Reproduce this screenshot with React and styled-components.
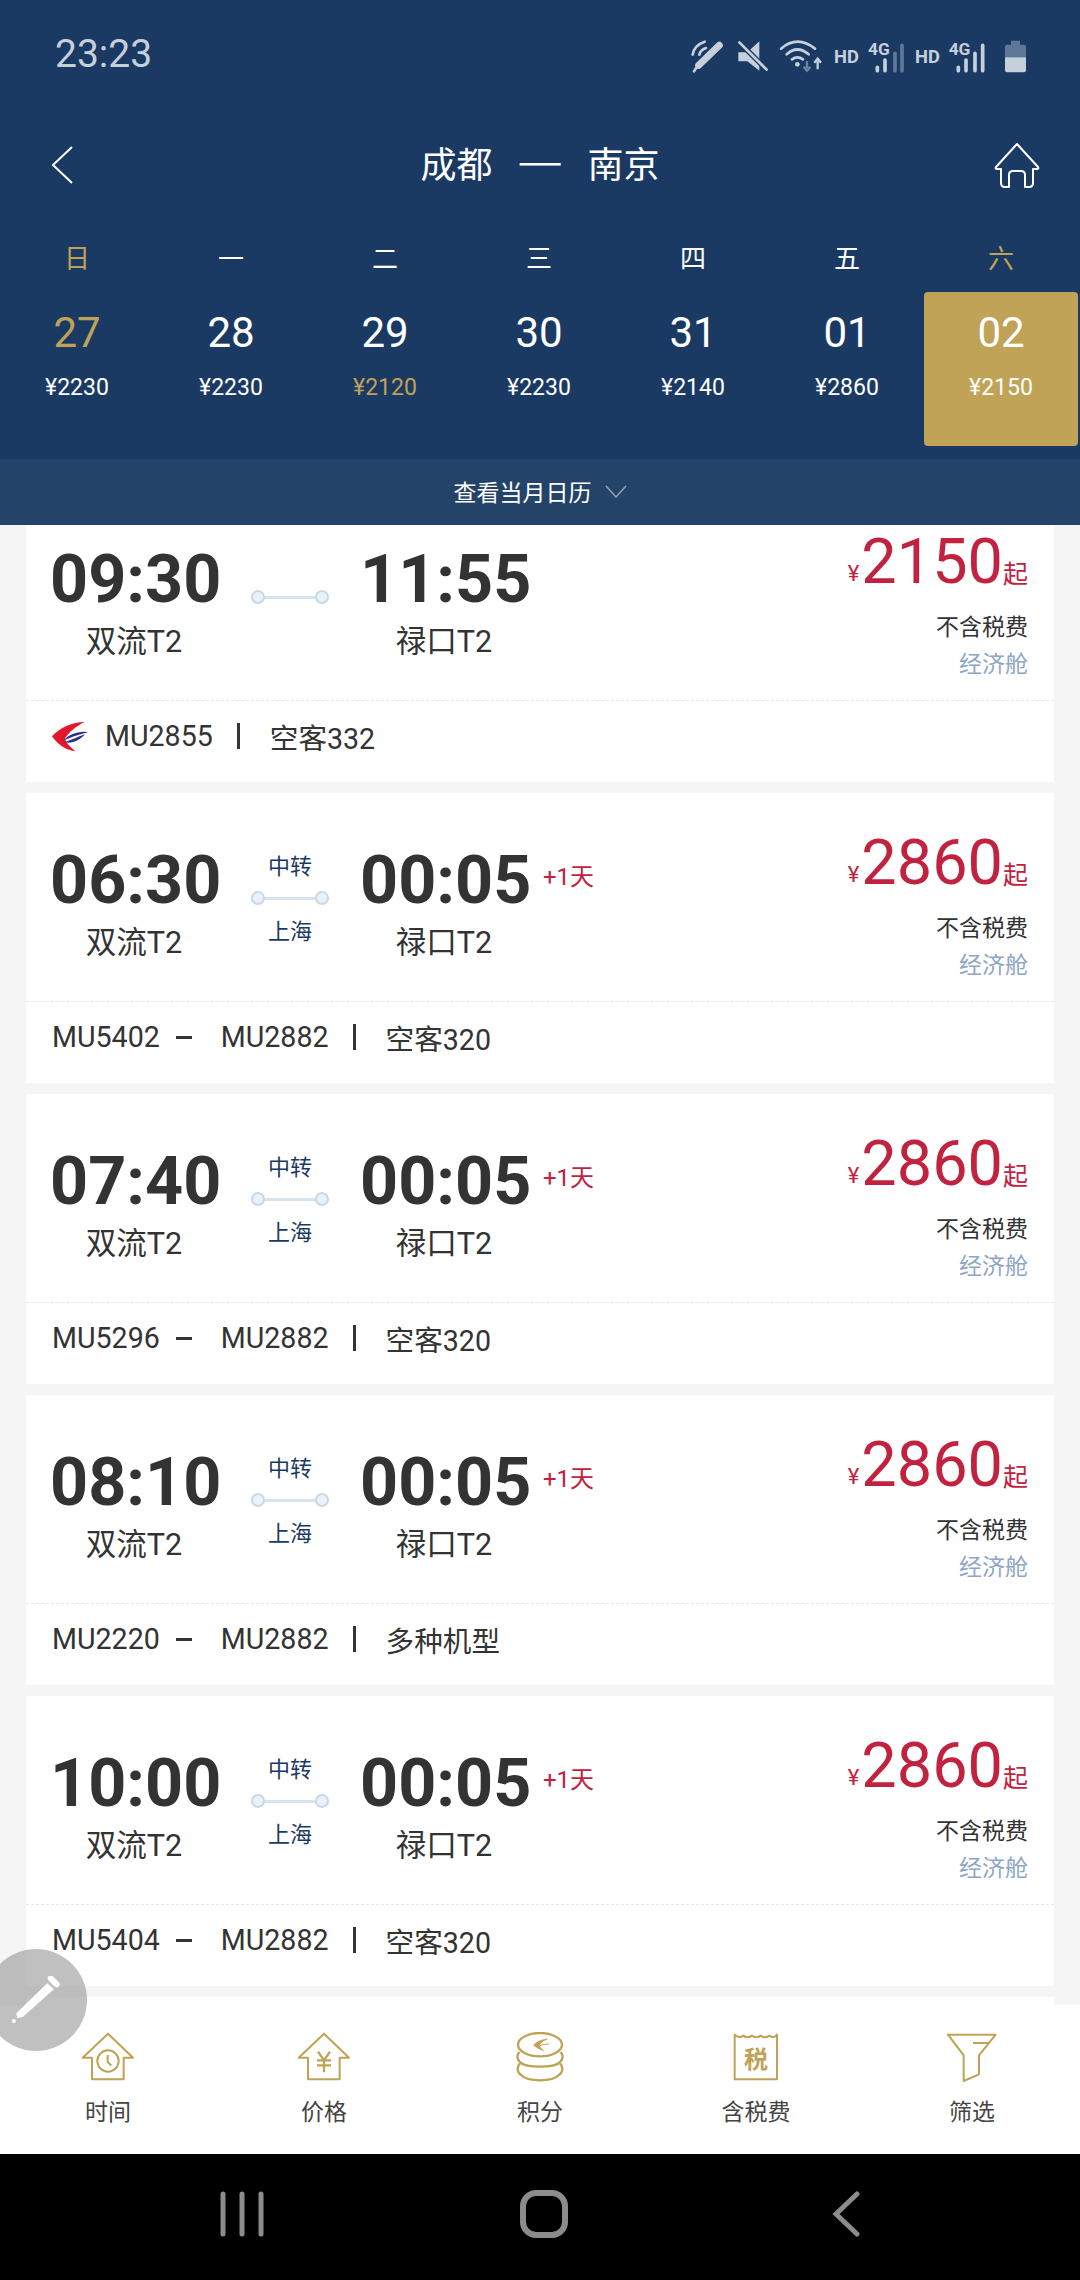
import React from "react";
import styled, { createGlobalStyle } from "styled-components";

const NAVY = "#1b3a63";
const GOLD = "#bfa258";
const RED = "#c1223f";

const days = ["日", "一", "二", "三", "四", "五", "六"];
const dates = [
    { day: "27", price: "¥2230", dayGold: true },
    { day: "28", price: "¥2230" },
    { day: "29", price: "¥2120", priceGold: true },
    { day: "30", price: "¥2230" },
    { day: "31", price: "¥2140" },
    { day: "01", price: "¥2860" },
    { day: "02", price: "¥2150", active: true },
];

const flights = [
    { from: "09:30", to: "11:55", price: "2150", codes: ["MU2855"], plane: "空客332", logo: true },
    { from: "06:30", to: "00:05", price: "2860", codes: ["MU5402", "MU2882"], plane: "空客320", via: "上海", nextDay: true },
    { from: "07:40", to: "00:05", price: "2860", codes: ["MU5296", "MU2882"], plane: "空客320", via: "上海", nextDay: true },
    { from: "08:10", to: "00:05", price: "2860", codes: ["MU2220", "MU2882"], plane: "多种机型", via: "上海", nextDay: true },
    { from: "10:00", to: "00:05", price: "2860", codes: ["MU5404", "MU2882"], plane: "空客320", via: "上海", nextDay: true },
];

const StatusIcons = () => (
    <svg width="400" height="60" viewBox="0 0 1200 180" fill="none">
        <g stroke="#c6cfdc" strokeLinecap="round">
            <path d="M178 64L116 124" strokeWidth="21" />
            <path d="M110 130L102 142" strokeWidth="8" />
            <path d="M98 92Q102 64 134 53" strokeWidth="8" />
            <path d="M118 92Q121 78 138 72" strokeWidth="8" />
        </g>
        <path d="M235 85H262L298 52V140L262 112H235Z" fill="#c6cfdc" />
        <path d="M238 55L320 137" stroke={NAVY} strokeWidth="16" />
        <path d="M238 55L320 137" stroke="#c6cfdc" strokeWidth="8" strokeLinecap="round" />
        <g stroke="#c6cfdc" strokeLinecap="round" strokeWidth="8">
            <path d="M363 74Q412 32 465 74" />
            <path d="M380 91Q412 62 446 91" />
            <path d="M396 106Q412 94 429 106" />
        </g>
        <circle cx="412" cy="121" r="7" fill="#c6cfdc" />
        <path d="M441 112V132M431 128L441 140L451 128" stroke="#6d84a4" strokeWidth="7" />
        <path d="M473 136V112M463 116L473 104L483 116" stroke="#c6cfdc" strokeWidth="7" />
        <g fill="#c6cfdc" fontFamily="Roboto, sans-serif" fontWeight="700">
            <text x="522" y="118" fontSize="55">HD</text>
            <text x="624" y="92" fontSize="52">4G</text>
            <text x="765" y="118" fontSize="55">HD</text>
            <text x="866" y="92" fontSize="52">4G</text>
        </g>
        <g strokeLinecap="round" strokeWidth="11">
            <path d="M652 130V140M675 108V140" stroke="#c6cfdc" />
            <path d="M705 88V140M726 64V140" stroke="#5f7899" />
            <path d="M895 130V140M918 108V140M945 88V140M968 64V140" stroke="#c6cfdc" />
        </g>
        <path d="M1053 50H1080V62H1092Q1098 62 1098 68V100H1035V68Q1035 62 1041 62H1053Z" fill="#5f7899" />
        <path d="M1035 100H1098V139Q1098 145 1092 145H1041Q1035 145 1035 139Z" fill="#c6cfdc" />
    </svg>
);

const BackIcon = () => (
    <svg width="24" height="40" viewBox="0 0 24 40" fill="none">
        <path d="M22 2L3 20L22 38" stroke="#fff" strokeWidth="2" />
    </svg>
);

const HomeIcon = () => (
    <svg width="46" height="46" viewBox="0 0 46 46" fill="none">
        <path
            d="M23 2L2 25Q1 27 3 27H7V41Q7 45 11 45H15V33Q15 29 19 29H27Q31 29 31 33V45H35Q39 45 39 41V27H43Q45 27 44 25Z"
            stroke="#fff"
            strokeWidth="2"
            strokeLinejoin="round"
        />
    </svg>
);

const AirlineLogo = () => (
    <svg width="36" height="31" viewBox="0 0 107 90">
        <path d="M97 2C60 2 26 18 0 44C14 64 36 84 70 89C54 78 44 66 38 52C50 32 72 14 97 2Z" fill="#e1182c" />
        <path d="M107 32C80 27 50 38 33 58C55 47 80 38 107 32Z" fill="#2a2f8f" />
        <path d="M98 38C80 44 56 55 38 62C60 68 84 54 98 38Z" fill="#2a2f8f" />
    </svg>
);

const HouseShape = "M143 70L218 142H190V207H95V142H67Z";

const ClockIcon = () => (
    <svg width="56" height="50" viewBox="59 65 168 150" fill="none" stroke={GOLD} strokeWidth="6" strokeLinejoin="round">
        <path d={HouseShape} />
        <circle cx="143" cy="152" r="32" />
        <path d="M142 134V155L153 166" />
    </svg>
);

const YenIcon = () => (
    <svg width="56" height="50" viewBox="59 65 168 150" fill="none" stroke={GOLD} strokeLinejoin="round">
        <path d={HouseShape} strokeWidth="6" />
        <path d="M125 124L143 150L161 124M122 150H164M122 165H164M143 150V186" strokeWidth="7" />
    </svg>
);

const CoinsIcon = () => (
    <svg width="48" height="50" viewBox="0 0 144 150" fill="none" stroke={GOLD} strokeWidth="7">
        <ellipse cx="72" cy="38" rx="66" ry="35" />
        <path d="M10 60C0 72 4 84 14 92C30 108 114 108 130 92C140 84 144 72 134 60" />
        <path d="M12 94C0 106 4 122 16 130C34 150 110 150 128 130C140 122 144 106 132 94" />
        <path d="M96 20C76 22 60 30 52 40C62 48 72 54 84 56C76 50 72 44 70 40C76 30 84 26 96 20Z" fill={GOLD} strokeWidth="1" />
        <path d="M100 36C88 36 78 38 70 42" strokeWidth="3" />
    </svg>
);

const TaxIcon = () => (
    <svg width="56" height="50" viewBox="505 65 168 150" fill="none" stroke={GOLD} strokeWidth="6" strokeLinejoin="round">
        <path d="M525 73Q538 86 551 76Q564 86 577 76Q590 86 603 76Q616 86 629 76Q642 86 652 73V207H525Z" />
        <text x="589" y="174" fontSize="72" fontWeight="700" textAnchor="middle" fill={GOLD} stroke="none" fontFamily="'Noto Sans CJK SC', sans-serif">
            税
        </text>
    </svg>
);

const FunnelIcon = () => (
    <svg width="56" height="50" viewBox="1153 65 168 150" fill="none" stroke={GOLD} strokeWidth="6" strokeLinejoin="round">
        <path d="M1165 73H1308L1258 135V192L1212 212V135Z" />
        <path d="M1240 98H1288" />
    </svg>
);

const PencilIcon = () => (
    <svg width="48" height="48" viewBox="0 0 48 48" fill="#fff">
        <path d="M38.7 2.3L44.7 8.3" stroke="#fff" strokeWidth="6" strokeLinecap="round" />
        <path d="M35.3 7.3L42 13.3L11 40.7L5.3 42.3L4.3 37.3Z" />
        <circle cx="1.9" cy="45" r="2" />
    </svg>
);

const tabs = [
    { label: "时间", icon: <ClockIcon /> },
    { label: "价格", icon: <YenIcon /> },
    { label: "积分", icon: <CoinsIcon /> },
    { label: "含税费", icon: <TaxIcon /> },
    { label: "筛选", icon: <FunnelIcon /> },
];

const FlightCard = ({ flight }) => (
    <Card>
        <CardMain>
            <Stop>
                <Time>{flight.from}</Time>
                <Airport>双流T2</Airport>
            </Stop>
            <Route>
                <Via>{flight.via && "中转"}</Via>
                <Track />
                <Via>{flight.via}</Via>
            </Route>
            <Stop>
                <Time>{flight.to}</Time>
                <Airport>禄口T2</Airport>
            </Stop>
            {flight.nextDay && <NextDay>+1天</NextDay>}
            <PriceBox>
                <Price>
                    <small>¥</small>
                    <b>{flight.price}</b>
                    <em>起</em>
                </Price>
                <Tax>不含税费</Tax>
                <Cabin>经济舱</Cabin>
            </PriceBox>
        </CardMain>
        <CardFoot>
            {flight.logo && <AirlineLogo />}
            {flight.codes.map((code, i) => (
                <React.Fragment key={code}>
                    {i > 0 && <Dash />}
                    <span>{code}</span>
                </React.Fragment>
            ))}
            <Divider />
            <span>{flight.plane}</span>
        </CardFoot>
    </Card>
);

const App = () => {
    return (
        <Page lang="zh-CN">
            <GlobalStyle />
            <Header>
                <StatusBar>
                    <Clock>23:23</Clock>
                    <StatusIcons />
                </StatusBar>
                <TitleRow>
                    <BackIcon />
                    <Title>
                        <span>成都</span>
                        <i>一</i>
                        <span>南京</span>
                    </Title>
                    <HomeButton>
                        <HomeIcon />
                    </HomeButton>
                </TitleRow>
                <WeekRow>
                    {days.map((d, i) => (
                        <WeekDay key={d} $gold={i === 0 || i === 6}>{d}</WeekDay>
                    ))}
                </WeekRow>
                <DateRow>
                    {dates.map((d) => (
                        <DateCell key={d.day} $active={d.active}>
                            <DateNum $gold={d.dayGold}>{d.day}</DateNum>
                            <DatePrice $gold={d.priceGold}>{d.price}</DatePrice>
                        </DateCell>
                    ))}
                </DateRow>
                <CalendarBar>
                    <span>查看当月日历</span>
                    <svg width="22" height="13" viewBox="0 0 22 13" fill="none">
                        <path d="M1 1L11 12L21 1" stroke="#8fa3bd" strokeWidth="1.5" />
                    </svg>
                </CalendarBar>
            </Header>
            <List>
                <Cards>
                    {flights.map((f) => (
                        <FlightCard key={f.from} flight={f} />
                    ))}
                    <Card />
                </Cards>
            </List>
            <TabBar>
                {tabs.map((t) => (
                    <Tab key={t.label}>
                        {t.icon}
                        <span>{t.label}</span>
                    </Tab>
                ))}
            </TabBar>
            <NavBar>
                <svg width="44" height="46" viewBox="0 0 44 46" fill="none" stroke="#8c8c8c" strokeWidth="5" strokeLinecap="round">
                    <path d="M3 3V43M22 3V43M41 3V43" />
                </svg>
                <NavHome width="48" height="48" viewBox="0 0 48 48" fill="none">
                    <rect x="3" y="3" width="42" height="42" rx="13" stroke="#8c8c8c" strokeWidth="6" />
                </NavHome>
                <svg width="28" height="46" viewBox="0 0 28 46" fill="none">
                    <path d="M25 3L4 23L25 43" stroke="#8c8c8c" strokeWidth="5" strokeLinecap="round" />
                </svg>
            </NavBar>
            <Fab>
                <PencilIcon />
            </Fab>
        </Page>
    );
};
export default App;

const GlobalStyle = createGlobalStyle`
    body {
        margin: 0;
        font-family: Roboto, "Noto Sans CJK SC", sans-serif;
    }
`;

const Page = styled.div`
    position: relative;
    display: flex;
    flex-direction: column;
    width: 1080px;
    height: 2280px;
    overflow: hidden;
    background: #f5f5f5;
`;

const Header = styled.header`
    flex: none;
    background: ${NAVY};
    color: #fff;
`;

const StatusBar = styled.div`
    display: flex;
    justify-content: space-between;
    align-items: center;
    height: 106px;
    padding: 0 20px 0 55px;
    box-sizing: border-box;
    & svg {
        margin-top: 2px;
    }
`;

const Clock = styled.div`
    padding-top: 2px;
    font-size: 39px;
    color: #c6cfdc;
`;

const TitleRow = styled.div`
    display: grid;
    grid-template-columns: 1fr auto 1fr;
    align-items: center;
    height: 118px;
    padding: 0 40px 0 50px;
`;

const Title = styled.div`
    display: flex;
    align-items: center;
    margin: -6px 0 0 -10px;
    font-size: 36px;
    & i {
        font-style: normal;
        font-size: 45px;
        font-weight: 300;
        margin: 0 25px 0 25px;
    }
`;

const HomeButton = styled.div`
    justify-self: end;
    height: 46px;
`;

const WeekRow = styled.div`
    display: grid;
    grid-template-columns: repeat(7, 1fr);
    align-items: center;
    height: 68px;
    padding: 0 2px 3px 0;
    box-sizing: border-box;
`;

const WeekDay = styled.div`
    text-align: center;
    font-size: 26px;
    color: ${(p) => (p.$gold ? GOLD : "#fff")};
`;

const DateRow = styled.div`
    display: grid;
    grid-template-columns: repeat(7, 1fr);
    height: 154px;
    padding-right: 2px;
    margin-bottom: 13px;
`;

const DateCell = styled.div`
    border-radius: 4px;
    text-align: center;
    background: ${(p) => (p.$active ? "#c0a356" : "transparent")};
`;

const DateNum = styled.div`
    padding-top: 17px;
    font-size: 42px;
    line-height: 48px;
    color: ${(p) => (p.$gold ? GOLD : "#fff")};
`;

const DatePrice = styled.div`
    margin-top: 16px;
    font-size: 23px;
    line-height: 30px;
    color: ${(p) => (p.$gold ? GOLD : "#fff")};
`;

const CalendarBar = styled.div`
    display: flex;
    justify-content: center;
    align-items: center;
    gap: 13px;
    height: 66px;
    padding-bottom: 2px;
    box-sizing: border-box;
    font-size: 23px;
    background: #244369;
`;

const List = styled.main`
    flex: 1;
    min-height: 0;
    overflow: hidden;
`;

const Cards = styled.div`
    display: flex;
    flex-direction: column;
    gap: 11px;
    margin: -33px 26px 0;
`;

const Card = styled.article`
    flex: none;
    height: 290px;
    background: #fff;
`;

const CardMain = styled.div`
    display: flex;
    box-sizing: border-box;
    height: 209px;
    padding: 54px 26px 0 24px;
    border-bottom: 1px dashed #e6e6e6;
`;

const Stop = styled.div`
    width: 168px;
    text-align: center;
`;

const Time = styled.div`
    font-size: 66.5px;
    line-height: 66px;
    font-weight: 700;
    color: #333;
`;

const Airport = styled.div`
    margin-top: 10px;
    font-size: 30.6px;
    line-height: 40px;
    color: #333;
`;

const Route = styled.div`
    display: flex;
    flex-direction: column;
    align-items: center;
    width: 78px;
    margin: 5px 31px 0 33px;
`;

const Via = styled.div`
    flex: none;
    height: 29px;
    font-size: 22px;
    line-height: 30px;
    color: ${NAVY};
    &:last-child {
        margin-top: 2px;
    }
`;

const Track = styled.div`
    position: relative;
    flex: none;
    width: 100%;
    height: 34px;
    background: linear-gradient(#d8e3f0, #d8e3f0) center / 100% 3px no-repeat;
    &::before,
    &::after {
        content: "";
        position: absolute;
        top: 10px;
        box-sizing: border-box;
        width: 14px;
        height: 14px;
        border: 2px solid #c9d9ea;
        border-radius: 50%;
        background: #e9f1f9;
    }
    &::before {
        left: 0;
    }
    &::after {
        right: 0;
    }
`;

const NextDay = styled.div`
    margin: 14px 0 0 15px;
    font-size: 24px;
    line-height: 32px;
    color: ${RED};
`;

const PriceBox = styled.div`
    margin: -16px 0 0 auto;
    text-align: right;
`;

const Price = styled.div`
    display: flex;
    align-items: flex-end;
    justify-content: flex-end;
    height: 63px;
    color: ${RED};
    & small {
        font-size: 22px;
        line-height: 38px;
        margin-right: 2px;
    }
    & b {
        font-size: 63px;
        line-height: 63px;
        font-weight: 400;
    }
    & em {
        font-style: normal;
        font-size: 25px;
        line-height: 36px;
    }
`;

const Tax = styled.div`
    margin-top: 18px;
    font-size: 23px;
    line-height: 34px;
    color: #333;
`;

const Cabin = styled.div`
    margin-top: 3px;
    font-size: 23px;
    line-height: 34px;
    color: #8ea6c6;
`;

const CardFoot = styled.div`
    display: flex;
    align-items: center;
    height: 70px;
    padding: 0 26px;
    font-size: 28.6px;
    color: #333;
    & svg {
        margin-right: 17px;
    }
`;

const Dash = styled.i`
    width: 16px;
    height: 3px;
    margin: 0 29px 0 16px;
    background: #333;
`;

const Divider = styled.i`
    width: 3px;
    height: 26px;
    margin: 0 30px 0 24px;
    background: #333;
`;

const TabBar = styled.nav`
    flex: none;
    display: grid;
    grid-template-columns: repeat(5, 1fr);
    height: 149px;
    box-sizing: border-box;
    padding-top: 27px;
    background: #fff;
`;

const Tab = styled.div`
    display: flex;
    flex-direction: column;
    align-items: center;
    font-size: 23px;
    color: #444;
    & span {
        margin-top: 15px;
        line-height: 32px;
    }
`;

const NavBar = styled.div`
    flex: none;
    display: flex;
    align-items: center;
    height: 126px;
    padding: 0 220px 6px;
    box-sizing: border-box;
    justify-content: space-between;
    background: #000;
`;

const NavHome = styled.svg`
    margin-right: 9px;
`;

const Fab = styled.div`
    position: absolute;
    left: -15px;
    top: 1949px;
    display: flex;
    justify-content: center;
    align-items: center;
    width: 102px;
    height: 102px;
    border-radius: 50%;
    background: rgba(150, 150, 150, 0.6);
`;
